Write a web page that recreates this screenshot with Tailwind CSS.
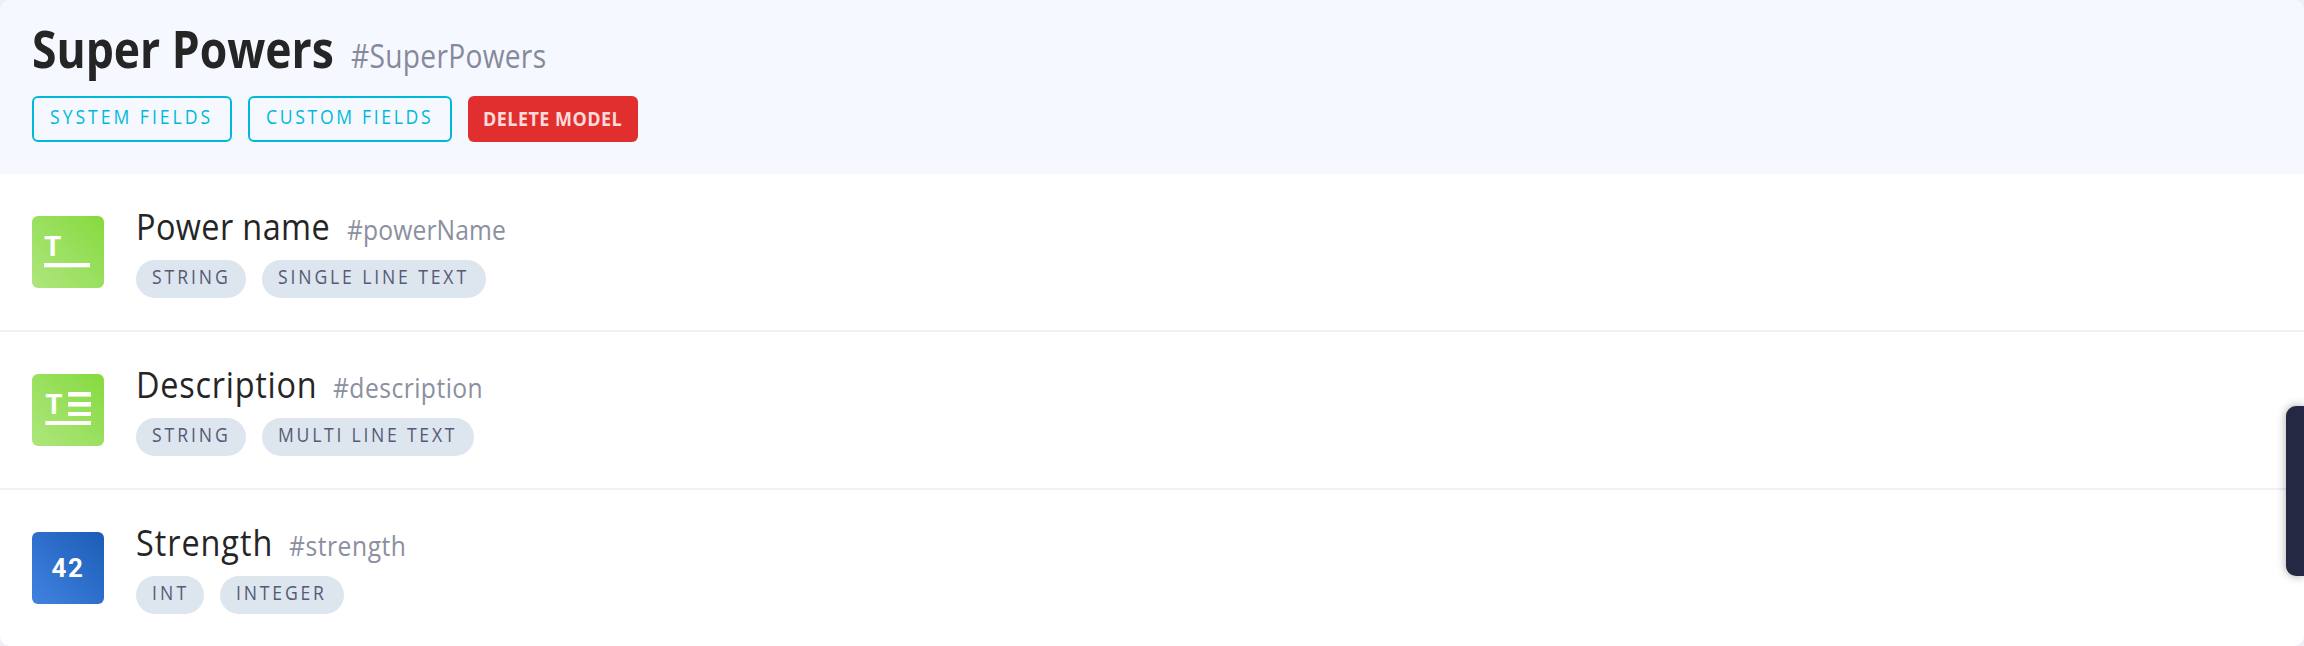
<!DOCTYPE html>
<html lang="en">
<head>
<meta charset="utf-8">
<title>Super Powers</title>
<script src="https://cdn.jsdelivr.net/npm/@tailwindcss/browser@4"></script>
</head>
<body class="bg-[#eef0f6] font-['Open_Sans',sans-serif]">
<main class="relative h-[646px] w-full overflow-hidden rounded-[10px] bg-white">
  <header class="h-[174px] bg-[#f5f8ff] px-8 pt-3">
    <div class="flex h-[72px] items-baseline whitespace-nowrap leading-[72px]">
      <h1 class="w-[319px] origin-left scale-x-[0.855] text-[52px] font-bold tracking-[0px] text-[#252525]">Super Powers</h1>
      <span class="origin-left scale-x-[0.88] text-[32px] tracking-[0.33px] text-[#858a9b]">#SuperPowers</span>
    </div>
    <div class="mt-3 flex gap-4 whitespace-nowrap text-[20px]">
      <button class="flex h-[46px] w-[200px] rounded-md border-2 border-[#00b9da] pl-4 leading-[38px] text-[#00b9da]"><span class="origin-left scale-x-[0.88] tracking-[3.38px]">SYSTEM FIELDS</span></button>
      <button class="flex h-[46px] w-[204px] rounded-md border-2 border-[#00b9da] pl-4 leading-[38px] text-[#00b9da]"><span class="origin-left scale-x-[0.88] tracking-[3.02px]">CUSTOM FIELDS</span></button>
      <button class="flex h-[46px] w-[170px] rounded-md bg-[#e12f2f] pl-[15px] font-bold leading-[46px] text-[#ffdada]"><span class="origin-left scale-x-90 tracking-[0.5px]">DELETE MODEL</span></button>
    </div>
  </header>

  <section class="flex h-[158px] gap-8 border-b-2 border-[#f0f1f8] pl-8 whitespace-nowrap">
    <svg class="mt-[42px] size-[72px] shrink-0 rounded-md bg-linear-45 from-[#aee67c] to-[#85da3a]" viewBox="0 0 72 72" fill="#fff">
      <text x="12" y="39.8" font-family="Roboto" font-weight="700" font-size="28">T</text>
      <rect x="12" y="47" width="46" height="4.3"/>
    </svg>
    <div class="pt-7">
      <div class="flex h-[50px] items-baseline leading-[50px]">
        <h2 class="w-[211px] origin-left scale-x-90 text-[36px] tracking-[0.45px] text-[#252525]">Power name</h2>
        <span class="origin-left scale-x-[0.88] text-[28px] tracking-[0.15px] text-[#8b8fa0]">#powerName</span>
      </div>
      <div class="mt-2 flex gap-4 text-[20px] leading-[34px] text-[#555a75]">
        <div class="flex h-[38px] w-[110px] rounded-full bg-[#dde5ef] pl-4"><span class="origin-left scale-x-[0.88] tracking-[3.3px]">STRING</span></div>
        <div class="flex h-[38px] w-[224px] rounded-full bg-[#dde5ef] pl-4"><span class="origin-left scale-x-[0.88] tracking-[3.25px]">SINGLE LINE TEXT</span></div>
      </div>
    </div>
  </section>

  <section class="flex h-[158px] gap-8 border-b-2 border-[#f0f1f8] pl-8 whitespace-nowrap">
    <svg class="mt-[42px] size-[72px] shrink-0 rounded-md bg-linear-45 from-[#aee67c] to-[#85da3a]" viewBox="0 0 72 72" fill="#fff">
      <text x="13.3" y="39.5" font-family="Roboto" font-weight="700" font-size="28">T</text>
      <rect x="36" y="18" width="23" height="4.6"/>
      <rect x="36" y="28" width="23" height="4.6"/>
      <rect x="36" y="38" width="23" height="4"/>
      <rect x="13.4" y="47" width="45.6" height="4"/>
    </svg>
    <div class="pt-7">
      <div class="flex h-[50px] items-baseline leading-[50px]">
        <h2 class="w-[197px] origin-left scale-x-90 text-[36px] tracking-[0.85px] text-[#252525]">Description</h2>
        <span class="origin-left scale-x-[0.88] text-[28px] tracking-[0.52px] text-[#8b8fa0]">#description</span>
      </div>
      <div class="mt-2 flex gap-4 text-[20px] leading-[34px] text-[#555a75]">
        <div class="flex h-[38px] w-[110px] rounded-full bg-[#dde5ef] pl-4"><span class="origin-left scale-x-[0.88] tracking-[3.3px]">STRING</span></div>
        <div class="flex h-[38px] w-[212px] rounded-full bg-[#dde5ef] pl-4"><span class="origin-left scale-x-[0.88] tracking-[3.12px]">MULTI LINE TEXT</span></div>
      </div>
    </div>
  </section>

  <section class="flex h-[156px] gap-8 pl-8 whitespace-nowrap">
    <svg class="mt-[42px] size-[72px] shrink-0 rounded-md bg-linear-45 from-[#4083df] to-[#1b5cb7]" viewBox="0 0 72 72" fill="#fff">
      <text x="19.5" y="45.3" font-family="Roboto" font-weight="700" font-size="26" letter-spacing="1.6">42</text>
    </svg>
    <div class="pt-7">
      <div class="flex h-[50px] items-baseline leading-[50px]">
        <h2 class="w-[153px] origin-left scale-x-90 text-[36px] tracking-[1.05px] text-[#252525]">Strength</h2>
        <span class="origin-left scale-x-[0.88] text-[28px] tracking-[0.6px] text-[#8b8fa0]">#strength</span>
      </div>
      <div class="mt-2 flex gap-4 text-[20px] leading-[34px] text-[#555a75]">
        <div class="flex h-[38px] w-[68px] rounded-full bg-[#dde5ef] pl-4"><span class="origin-left scale-x-[0.88] tracking-[3.6px]">INT</span></div>
        <div class="flex h-[38px] w-[124px] rounded-full bg-[#dde5ef] pl-4"><span class="origin-left scale-x-[0.88] tracking-[3.2px]">INTEGER</span></div>
      </div>
    </div>
  </section>

  <aside class="absolute top-[406px] right-0 h-[170px] w-[18px] rounded-l-[10px] bg-[#252842] shadow-[0_0_10px_rgba(0,0,0,0.35)]"></aside>
</main>
</body>
</html>
